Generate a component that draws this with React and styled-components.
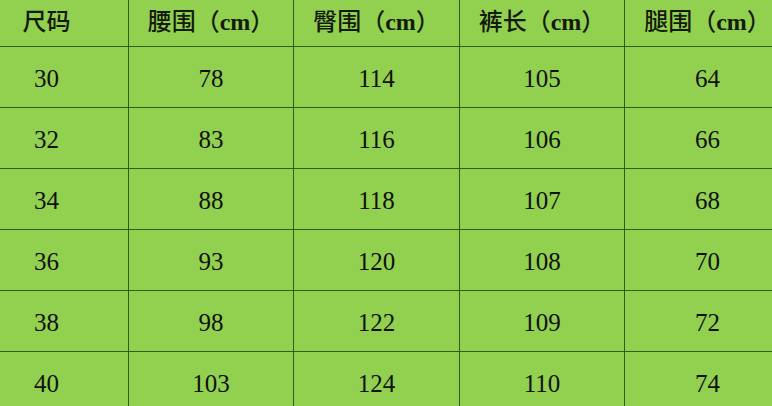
import React from 'react';
import styled, { createGlobalStyle } from 'styled-components';

const GlobalStyle = createGlobalStyle`
  html, body {
    margin: 0;
    padding: 0;
    background: #92d050;
    overflow: hidden;
  }
`;

const headers = ['尺码', '腰围', '臀围', '裤长', '腿围'];

const rows = [
  ['30', '78', '114', '105', '64'],
  ['32', '83', '116', '106', '66'],
  ['34', '88', '118', '107', '68'],
  ['36', '93', '120', '108', '70'],
  ['38', '98', '122', '109', '72'],
  ['40', '103', '124', '110', '74'],
];

const widths = [164, 165, 166, 165, 166];

const Page = styled.div`
  width: 772px;
  height: 406px;
  overflow: hidden;
  background: #92d050;
`;

const SizeTable = styled.table`
  width: 826px;
  border-collapse: collapse;
  table-layout: fixed;
  margin: -15px 0 0 -36px;
  background: #92d050;
`;

const HeadCell = styled.th`
  height: 61px;
  padding: 6px 0 0;
  box-sizing: border-box;
  border: 1px solid #2f5f16;
  font-family: 'Noto Sans CJK SC', sans-serif;
  font-size: 24px;
  font-weight: 500;
  color: #141a0c;
  text-align: center;
  vertical-align: middle;
  white-space: nowrap;
`;

const Unit = styled.span`
  font-family: 'Liberation Serif', serif;
  font-weight: 700;
  font-size: 24px;
`;

const Cell = styled.td`
  height: 61px;
  padding: 3px 0 0;
  box-sizing: border-box;
  border: 1px solid #2f5f16;
  font-family: 'Liberation Serif', 'Times New Roman', serif;
  font-size: 25px;
  color: #111;
  text-align: center;
  vertical-align: middle;
`;

const App = () => {
  return (
    <Page>
      <GlobalStyle />
      <SizeTable>
        <colgroup>
          {widths.map((w, i) => (
            <col key={i} style={{ width: w }} />
          ))}
        </colgroup>
        <thead>
          <tr>
            {headers.map((h, i) => (
              <HeadCell key={h}>
                {h}
                {i > 0 && (
                  <>
                    （<Unit>cm</Unit>）
                  </>
                )}
              </HeadCell>
            ))}
          </tr>
        </thead>
        <tbody>
          {rows.map((r) => (
            <tr key={r[0]}>
              {r.map((v, i) => (
                <Cell key={i}>{v}</Cell>
              ))}
            </tr>
          ))}
        </tbody>
      </SizeTable>
    </Page>
  );
};

export default App;
